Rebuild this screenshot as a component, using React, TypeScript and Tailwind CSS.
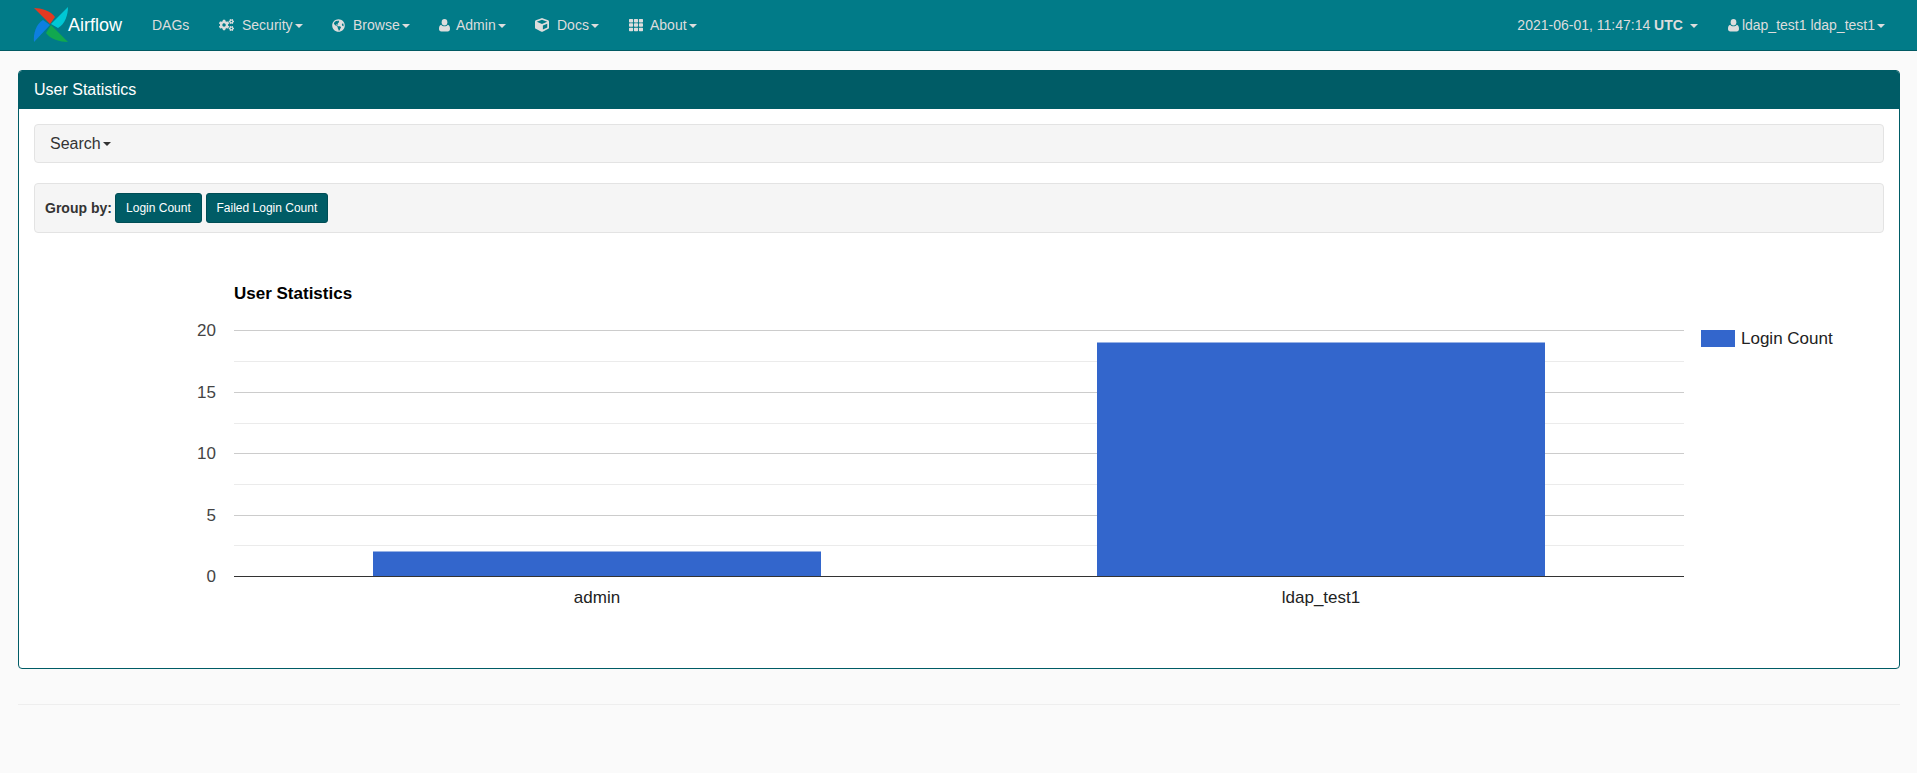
import React from 'react';
import { FaCogs, FaGlobeAmericas, FaCube, FaTh } from 'react-icons/fa';

const gridLines = [
  { y: 77.5, color: '#cccccc' },
  { y: 108.5, color: '#ebebeb' },
  { y: 139.5, color: '#cccccc' },
  { y: 170.5, color: '#ebebeb' },
  { y: 200.5, color: '#cccccc' },
  { y: 231.5, color: '#ebebeb' },
  { y: 262.5, color: '#cccccc' },
  { y: 292.5, color: '#ebebeb' },
];

const yLabels = [
  { label: '20', y: 77 },
  { label: '15', y: 139 },
  { label: '10', y: 200 },
  { label: '5', y: 262 },
  { label: '0', y: 323 },
];

const Caret = () => (
  <span className="ml-[2px] inline-block h-0 w-0 border-x-4 border-t-4 border-x-transparent border-t-current align-middle" />
);

const UserIcon = ({ className }: { className?: string }) => (
  <svg viewBox="0 0 12 14" className={className} fill="currentColor">
    <ellipse cx="6" cy="4" rx="3.1" ry="3.5" />
    <path d="M2.4 6.6C3.2 7.8 4.5 8.4 6 8.4s2.8-.6 3.6-1.8c1.5.4 2.4 1.9 2.4 4.4 0 1.8-1 3-2.5 3h-7C1 14 0 12.8 0 11c0-2.500.9-4 2.400-4.400z" />
  </svg>
);

const Logo = () => (
  <svg viewBox="0 0 36 36" className="h-9 w-9">
    <path d="M17 17 L1 1 C8 1 18 4 22 10 Z" fill="#e43921" />
    <path d="M18 17 L35 0 C35 8 32 17 25 21 Z" fill="#00c7d4" />
    <path d="M18 18 L35 35 C27 35 17 32 13 26 Z" fill="#11a84f" />
    <path d="M17 18 L1 35 C0 27 3 17 10 13 Z" fill="#0d7fe0" />
  </svg>
);

const navItems = [
  { label: 'Security', icon: <FaCogs className="h-[14px] w-[15px]" />, gap: 'gap-[8px]', width: 'w-[113px]' },
  { label: 'Browse', icon: <FaGlobeAmericas className="h-[13px] w-[13px]" />, gap: 'gap-[8px]', width: 'w-[107px]' },
  { label: 'Admin', icon: <UserIcon className="h-[14px] w-[11px]" />, gap: 'gap-[6px]', width: 'w-[96px]' },
  { label: 'Docs', icon: <FaCube className="h-[14px] w-[14px]" />, gap: 'gap-[8px]', width: 'w-[94px]' },
  { label: 'About', icon: <FaTh className="h-[14px] w-[14px]" />, gap: 'gap-[7px]', width: 'w-auto' },
];

export default function App() {
  return (
    <div className="min-h-[773px] bg-[#fafafa] font-['Liberation_Sans',Arial,sans-serif] text-[14px] text-[#333333]">
      {/* Navbar */}
      <nav className="flex h-[51px] items-center border-b border-[#015a63] bg-[#017b88] pl-[33px] pr-[32px] text-[14px] text-[#dddddd]">
        <div className="flex w-[119px] items-center">
          <Logo />
          <span className="ml-[-1px] text-[18px] text-white">Airflow</span>
        </div>
        <span className="w-[67px]">DAGs</span>
        {navItems.map((item) => (
          <span key={item.label} className={`flex items-center ${item.gap} ${item.width}`}>
            {item.icon}
            <span>
              {item.label}
              <Caret />
            </span>
          </span>
        ))}
        <span className="ml-auto">
          2021-06-01, 11:47:14 <b>UTC</b>
          <span className="ml-[7px] inline-block h-0 w-0 border-x-4 border-t-4 border-x-transparent border-t-current align-middle" />
        </span>
        <span className="ml-[30px] flex items-center gap-[3px]">
          <UserIcon className="h-[14px] w-[11px]" />
          <span>
            ldap_test1 ldap_test1
            <Caret />
          </span>
        </span>
      </nav>

      {/* Panel */}
      <div className="ml-[18px] mr-[17px] mt-[19px] overflow-hidden rounded border border-[#005c66] bg-white">
        <div className="flex h-[38px] items-center bg-[#005c66] px-[15px] text-[16px] text-white">User Statistics</div>
        <div className="p-[15px]">
          <div className="flex h-[39px] items-center rounded border border-[#e3e3e3] bg-[#f5f5f5] px-[15px] text-[16px] text-[#333333]">
            Search
            <Caret />
          </div>
          <div className="mt-[20px] flex h-[50px] items-center gap-[4px] rounded border border-[#e3e3e3] bg-[#f5f5f5] px-[10px] text-[14px]">
            <b className="mr-[-1px]">Group by:</b>
            <button className="h-[30px] w-[87px] rounded-[3px] border border-[#004d55] bg-[#005c66] text-[12px] text-white">
              Login Count
            </button>
            <button className="h-[30px] w-[122px] rounded-[3px] border border-[#004d55] bg-[#005c66] text-[12px] text-white">
              Failed Login Count
            </button>
          </div>

          {/* Chart */}
          <svg width="1851" height="400" className="mt-[20px] block">
            <text x="200" y="46" fontSize="17" fontWeight="700" fill="#000000">
              User Statistics
            </text>
            {gridLines.map((line) => (
              <line key={line.y} x1="200" x2="1650" y1={line.y} y2={line.y} stroke={line.color} />
            ))}
            {yLabels.map((tick) => (
              <text key={tick.label} x="182" y={tick.y + 6} fontSize="17" fill="#444444" textAnchor="end">
                {tick.label}
              </text>
            ))}
            <rect x="339" y="298.500" width="448" height="24.500" fill="#3366cc" />
            <rect x="1063" y="89.500" width="448" height="233.500" fill="#3366cc" />
            <line x1="200" x2="1650" y1="323.500" y2="323.500" stroke="#333333" />
            <text x="563" y="350" fontSize="17" fill="#222222" textAnchor="middle">
              admin
            </text>
            <text x="1287" y="350" fontSize="17" fill="#222222" textAnchor="middle">
              ldap_test1
            </text>
            <rect x="1667" y="77" width="34" height="17" fill="#3366cc" />
            <text x="1707" y="91" fontSize="17" fill="#222222">
              Login Count
            </text>
          </svg>
        </div>
      </div>

      <hr className="ml-[18px] mr-[17px] mt-[35px] border-t border-[#eeeeee]" />
    </div>
  );
}
